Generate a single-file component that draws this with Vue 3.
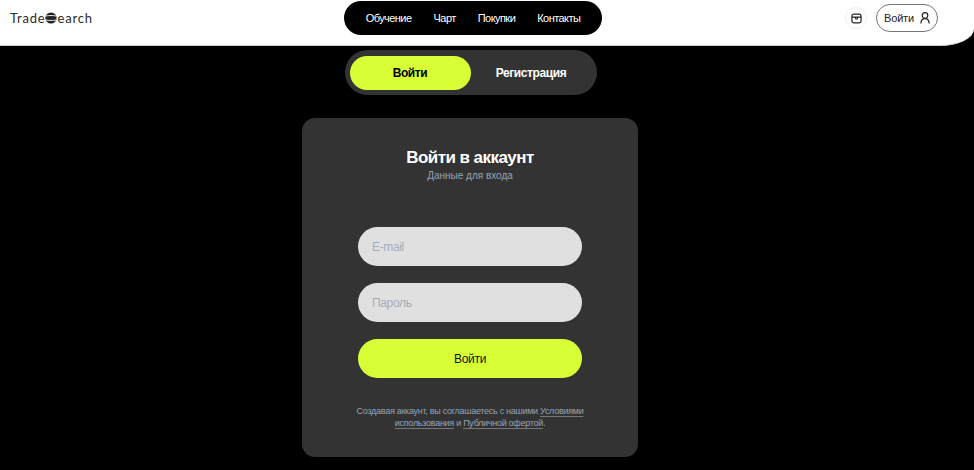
<script setup>
const links = ['Обучение', 'Чарт', 'Покупки', 'Контакты']
</script>

<template>
  <div class="page">
    <header class="header">
      <div class="logo">
        <span>Trade</span>
        <svg class="globe" width="12" height="12" viewBox="0 0 12 12">
          <circle cx="6" cy="6" r="5.6" fill="#222" />
          <path d="M1 4C3 3.4 9 3.4 11 4M1 8C3 8.6 9 8.6 11 8" stroke="#fff" stroke-width="0.9" fill="none" />
        </svg>
        <span>earch</span>
      </div>
      <nav class="nav">
        <a v-for="l in links" :key="l" class="nav-link">{{ l }}</a>
      </nav>
      <div class="actions">
        <span class="box-btn">
          <svg width="11" height="11" viewBox="0 0 12 12" fill="none" stroke="#222" stroke-width="1.3">
            <rect x="1" y="1.2" width="10" height="9.6" rx="2" />
            <path d="M1 4.6H11M4.4 4.6C4.6 6 5.2 6.6 6 6.6S7.4 6 7.6 4.6" />
          </svg>
        </span>
        <span class="login-btn">
          Войти
          <svg width="10" height="12" viewBox="0 0 10 12" fill="none" stroke="#222" stroke-width="1.2">
            <circle cx="5" cy="3.5" r="2.8" />
            <path d="M0.8 11.5C1 8.5 2.6 6.6 5 6.6S9 8.5 9.2 11.5" />
          </svg>
        </span>
      </div>
    </header>

    <main class="main">
      <div class="tabs">
        <span class="tab active">Войти</span>
        <span class="tab">Регистрация</span>
      </div>

      <section class="card">
        <h1 class="title">Войти в аккаунт</h1>
        <p class="sub">Данные для входа</p>
        <form class="form" @submit.prevent>
          <input class="field" type="text" placeholder="E-mail" />
          <input class="field" type="password" placeholder="Пароль" />
          <button class="submit" type="submit">Войти</button>
        </form>
        <p class="terms">
          Создавая аккаунт, вы соглашаетесь с нашими <a>Условиями использования</a> и <a>Публичной офертой</a>.
        </p>
      </section>
    </main>
  </div>
</template>

<style>
html, body { margin: 0; background: #000; }
</style>

<style scoped>
.page {
  width: 974px;
  height: 470px;
  overflow: hidden;
  background: #000;
  font-family: "Liberation Sans", Arial, sans-serif;
}
.header {
  height: 46px;
  box-sizing: border-box;
  background: #fff;
  border-bottom-right-radius: 34px 17px;
  border-bottom: 1px solid #ccc;
  position: relative;
  display: flex;
  align-items: center;
  justify-content: space-between;
  padding: 0 36px 0 10px;
}
.logo {
  display: flex;
  align-items: center;
  font-family: Lato, sans-serif;
  font-size: 13px;
  letter-spacing: 0.8px;
  color: #2a2a2a;
  margin-top: -9px;
}
.nav {
  position: absolute;
  left: 344px;
  top: 1px;
  width: 258px;
  height: 34px;
  box-sizing: border-box;
  background: #000;
  border-radius: 17px;
  display: flex;
  align-items: center;
  justify-content: center;
  gap: 22px;
}
.nav-link {
  color: #fff;
  font-size: 11px;
  letter-spacing: -0.55px;
}
.actions {
  display: flex;
  align-items: center;
  gap: 9px;
  margin-top: -9px;
}
.box-btn {
  width: 22px;
  height: 22px;
  border-radius: 50%;
  border: 1px solid #eee;
  box-sizing: border-box;
  display: flex;
  align-items: center;
  justify-content: center;
}
.login-btn {
  width: 62px;
  height: 28px;
  box-sizing: border-box;
  border: 1px solid #777;
  border-radius: 14px;
  display: flex;
  align-items: center;
  justify-content: center;
  gap: 6px;
  font-size: 11px;
  letter-spacing: -0.2px;
  color: #222;
}
.main {
  width: 940px;
  display: flex;
  flex-direction: column;
  align-items: center;
  padding-top: 4px;
}
.tabs {
  width: 252px;
  height: 45px;
  margin-left: 1px;
  box-sizing: border-box;
  padding: 6px 5px 5px;
  background: #333;
  border-radius: 23px;
  display: flex;
}
.tab {
  flex: 1;
  display: flex;
  align-items: center;
  justify-content: center;
  font-size: 12px;
  font-weight: 700;
  letter-spacing: -0.4px;
  color: #fff;
  border-radius: 17px;
}
.tab.active {
  flex: 0 0 121px;
  background: #d8ff36;
  color: #000;
}
.card {
  margin-top: 23px;
  width: 336px;
  height: 339px;
  box-sizing: border-box;
  background: #333;
  border-radius: 13px;
  display: flex;
  flex-direction: column;
  align-items: center;
  padding-top: 29px;
}
.title {
  margin: 0;
  color: #fff;
  font-size: 17px;
  line-height: 21px;
  font-weight: 700;
  letter-spacing: -0.55px;
}
.sub {
  margin: 1px 0 0;
  color: #94a3b8;
  font-size: 10px;
  line-height: 14px;
}
.form {
  margin-top: 44px;
  display: flex;
  flex-direction: column;
  gap: 17px;
  width: 224px;
}
.field {
  height: 39px;
  box-sizing: border-box;
  width: 100%;
  border: 0;
  outline: 0;
  border-radius: 20px;
  background: #e0e0e0;
  padding: 0 14px;
  font-family: inherit;
  font-size: 12px;
  letter-spacing: -0.35px;
}
.field::placeholder { color: #a6adba; opacity: 1; }
.submit {
  height: 39px;
  border: 0;
  border-radius: 20px;
  background: #d8ff36;
  color: #111;
  font-family: inherit;
  font-size: 12px;
  letter-spacing: -0.3px;
  padding: 0;
}
.terms {
  margin: 28px 0 0;
  width: 232px;
  text-align: center;
  color: #94a3b8;
  font-size: 9px;
  line-height: 11.5px;
  letter-spacing: -0.28px;
}
.terms a {
  text-decoration: underline;
  text-decoration-color: #777;
  text-underline-offset: 2px;
}
</style>
